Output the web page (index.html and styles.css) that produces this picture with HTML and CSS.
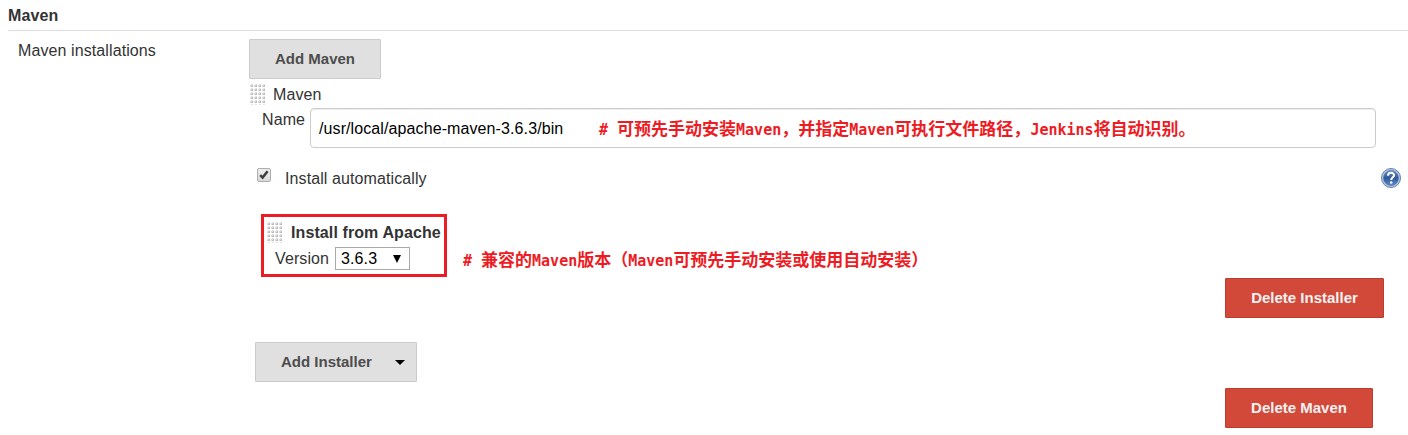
FILE: index.html
```html
<!DOCTYPE html>
<html lang="zh-CN">
<head>
<meta charset="utf-8">
<title>Maven</title>
<link rel="stylesheet" href="styles.css">
</head>
<body>
<svg class="defs" width="0" height="0">
  <defs>
    <pattern id="dots" width="4" height="4" patternUnits="userSpaceOnUse">
      <rect x="1" y="0" width="2" height="1" fill="#e2e2e2"/>
      <rect x="0" y="1" width="2" height="2" fill="#dcdcdc"/>
      <rect x="2" y="1" width="1" height="2" fill="#bcbcbc"/>
      <rect x="1" y="2" width="1" height="1" fill="#bcbcbc"/>
    </pattern>
  </defs>
</svg>
<main class="page">
  <h1 class="section-title">Maven</h1>
  <div class="section">
    <div class="section-label">Maven installations</div>
    <div class="section-body">
      <button class="btn btn-add">Add Maven</button>
      <div class="drag-row">
        <svg class="grip" width="15" height="21"><rect width="15" height="21" fill="url(#dots)"/></svg>
        <span>Maven</span>
      </div>
      <div class="name-row">
        <label class="name-label">Name</label>
        <div class="field"><span class="path">/usr/local/apache-maven-3.6.3/bin</span><span class="note"><span class="latin">#&nbsp;</span>可预先手动安装<span class="latin">Maven</span>，并指定<span class="latin">Maven</span>可执行文件路径，<span class="latin">Jenkins</span>将自动识别。</span></div>
      </div>
      <div class="auto-row">
        <svg class="check" width="14" height="14" viewBox="0 0 14 14">
          <defs><linearGradient id="box" x2="0" y2="1"><stop offset="0" stop-color="#eee"/><stop offset="1" stop-color="#d9d9d9"/></linearGradient></defs>
          <rect x=".5" y=".5" width="13" height="13" rx="1.5" fill="url(#box)" stroke="#adadad"/>
          <path d="M3.2 7.2 5.6 9.6 10.6 3.3" fill="none" stroke="#3c3c3c" stroke-width="2.5"/>
        </svg>
        <span class="auto-label">Install automatically</span>
        <svg class="help" width="20" height="20" viewBox="0 0 20 20">
          <defs><linearGradient id="blue" x2="0" y2="1"><stop offset="0" stop-color="#6d91c4"/><stop offset=".5" stop-color="#2f5899"/><stop offset="1" stop-color="#5c8bca"/></linearGradient></defs>
          <circle cx="10" cy="10" r="9.5" fill="#b4c6df" stroke="#6582a9"/>
          <circle cx="10" cy="10" r="7.5" fill="url(#blue)" stroke="#4a6ea6" stroke-width=".6"/>
          <path d="M7 7.8C7 3.9 13.1 4 13.1 7.3 13.1 9.3 10.2 9.4 10.2 12" fill="none" stroke="#fff" stroke-width="2"/>
          <circle cx="10.2" cy="14.4" r="1.25" fill="#fff"/>
        </svg>
      </div>
      <div class="installer-row">
        <div class="highlight">
          <div class="installer-head">
            <svg class="grip" width="15" height="21"><rect width="15" height="21" fill="url(#dots)"/></svg>
            <strong>Install from Apache</strong>
          </div>
          <div class="version-row">
            <label>Version</label>
            <div class="select"><span>3.6.3</span><svg width="8" height="8"><path d="M0 0H8L4 8Z"/></svg></div>
          </div>
        </div>
        <div class="note"><span class="latin">#&nbsp;</span>兼容的<span class="latin">Maven</span>版本（<span class="latin">Maven</span>可预先手动安装或使用自动安装）</div>
      </div>
      <button class="btn btn-danger btn-del-installer">Delete Installer</button>
      <button class="btn btn-menu"><span>Add Installer</span><svg width="10" height="5"><path d="M0 0H10L5 5Z"/></svg></button>
      <button class="btn btn-danger btn-del-maven">Delete Maven</button>
    </div>
  </div>
</main>
</body>
</html>
```
FILE: styles.css
```css
* { box-sizing: border-box; }
body {
  margin: 0;
  background: #fff;
  color: #333;
  font: 16px/20px "Liberation Sans", Arial, sans-serif;
  letter-spacing: .1px;
}
.defs { display: block; height: 0; }
.page { height: 435px; overflow: hidden; padding-left: 8px; }
.section-title {
  margin: 0;
  height: 31px;
  padding-top: 6px;
  border-bottom: 1px solid #e0e0e0;
  font-size: 16px;
  line-height: 20px;
}
.section { display: flex; }
.section-label { width: 241px; padding: 10px 0 0 10px; }
.section-body {
  flex: 1;
  display: flex;
  flex-direction: column;
  align-items: flex-start;
  padding-top: 8px;
}
.btn {
  display: block;
  height: 40px;
  padding: 0;
  border: 1px solid #ccc;
  border-radius: 1px;
  background: #e0e0e0;
  color: #4d4d4d;
  font: bold 15px/38px "Liberation Sans", Arial, sans-serif;
  text-align: center;
  white-space: nowrap;
}
.btn-add { width: 132px; }
.drag-row { display: flex; gap: 8px; height: 29px; padding: 5px 0 0 1px; line-height: 22px; }
.grip { flex: none; display: block; }
.name-row { display: flex; width: 1127px; height: 40px; padding-left: 13px; }
.name-label { width: 48px; padding-top: 2px; }
.field {
  flex: 1;
  display: flex;
  padding-left: 8px;
  border: 1px solid #ccc;
  border-radius: 4px;
  box-shadow: inset 0 1px 1px rgba(0, 0, 0, .075);
  color: #000;
  line-height: 39px;
  white-space: nowrap;
}
.path { width: 280px; }
.note {
  color: #ed1c24;
  font-family: "Noto Sans CJK SC", sans-serif;
  font-size: 17px;
  font-weight: bold;
  letter-spacing: 0;
  white-space: nowrap;
}
.field .note { line-height: 38px; }
.latin { font-family: "DejaVu Sans Mono", monospace; font-size: 15px; }
.auto-row { display: flex; width: 100%; height: 66px; padding: 20px 7px 0 8px; line-height: 22px; }
.check { display: block; flex: none; }
.auto-label { margin-left: 14px; }
.help { display: block; margin-left: auto; }
.installer-row { display: flex; height: 64px; padding-left: 12px; }
.highlight { width: 186px; height: 63px; border: 3px solid #ed1c24; white-space: nowrap; }
.installer-head { display: flex; gap: 9px; height: 30px; padding: 5px 0 0 3px; line-height: 22px; }
.version-row { display: flex; padding-left: 11px; gap: 6px; }
.version-row label { padding-top: 2px; }
.select {
  display: flex;
  align-items: center;
  justify-content: space-between;
  width: 75px;
  height: 23px;
  padding: 0 8px 0 5px;
  border: 1px solid #a9a9a9;
  color: #000;
}
.installer-row .note { margin: 35px 0 0 16px; }
.btn-danger { border-color: #b93d30; background: #d24939; color: #f2f2f2; }
.btn-del-installer { width: 159px; margin-left: 976px; }
.btn-menu {
  display: flex;
  align-items: center;
  justify-content: space-between;
  width: 162px;
  margin: 24px 0 6px 6px;
  padding: 0 11px 0 25px;
}
.btn-del-maven { width: 148px; margin-left: 976px; }
```
